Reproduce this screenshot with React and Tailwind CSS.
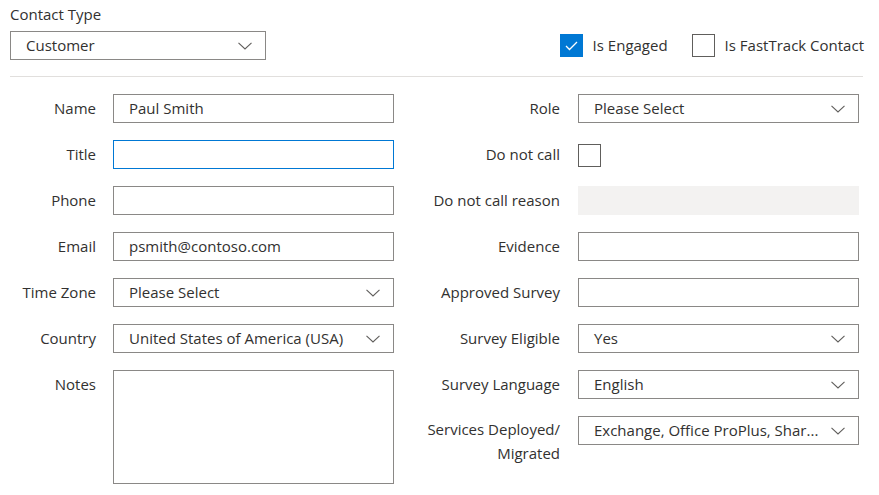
const font = { fontFamily: '"Open Sans", "Noto Sans", Arial, sans-serif' };

function Chevron() {
    return (
        <svg width="14" height="8" viewBox="0 0 14 8" className="shrink-0">
            <polyline points="0.5,0.8 7,7 13.5,0.8" fill="none" stroke="#605e5c" strokeWidth="1.1" />
        </svg>
    );
}

function Dropdown({ value, className = '' }) {
    return (
        <div className={`flex items-center justify-between border border-[#8a8886] bg-white pl-[15px] pr-[13px] ${className}`}>
            <span className="whitespace-nowrap text-[15px] text-[#323130]">{value}</span>
            <Chevron />
        </div>
    );
}

function TextBox({ value = '', focused = false, className = '' }) {
    return (
        <div
            className={`flex items-center bg-white pl-[15px] ${focused ? 'border-[1.5px] border-[#0078d4]' : 'border border-[#8a8886]'} ${className}`}
        >
            <span className="text-[15px] text-[#323130]">{value}</span>
        </div>
    );
}

function Checkbox({ checked = false }) {
    return checked ? (
        <div className="flex h-[23px] w-[23px] items-center justify-center bg-[#0078d4]">
            <svg width="13" height="10" viewBox="0 0 13 10">
                <polyline points="1,5 4.5,8.5 12,1" fill="none" stroke="white" strokeWidth="1.3" />
            </svg>
        </div>
    ) : (
        <div className="h-[23px] w-[23px] border-[1.5px] border-[#605e5c] bg-white" />
    );
}

function Row({ label, labelWidth, gap, children, top = 'pt-[2px]' }) {
    return (
        <div className="flex items-start" style={{ gap }}>
            <div className={`shrink-0 text-right text-[15px] leading-6 text-[#323130] ${top}`} style={{ width: labelWidth }}>
                {label}
            </div>
            {children}
        </div>
    );
}

const inputCls = 'h-[29px] w-[281px]';

export default function App() {
    return (
        <div className="h-[495px] w-[879px] bg-white" style={font}>
            {/* Header */}
            <div className="px-[10px]">
                <div className="pt-[2px] text-[15px] leading-6 text-[#323130]">Contact Type</div>
                <div className="mt-[5px] flex items-center justify-between">
                    <Dropdown value="Customer" className="h-[29px] w-[256px]" />
                    <div className="mr-[5px] flex items-center">
                        <div className="flex items-center gap-[10px]">
                            <Checkbox checked />
                            <span className="text-[15px] text-[#323130]">Is Engaged</span>
                        </div>
                        <div className="ml-[24px] flex items-center gap-[10px]">
                            <Checkbox />
                            <span className="text-[15px] text-[#323130]">Is FastTrack Contact</span>
                        </div>
                    </div>
                </div>
                <div className="mr-[6px] mt-[16px] h-px bg-[#e1dfdd]" />
            </div>

            {/* Form */}
            <div className="mt-[17px] flex px-[10px]">
                <div className="flex w-[384px] flex-col gap-[17px]">
                    <Row label="Name" labelWidth={86} gap={17}>
                        <TextBox value="Paul Smith" className={inputCls} />
                    </Row>
                    <Row label="Title" labelWidth={86} gap={17}>
                        <TextBox focused className={inputCls} />
                    </Row>
                    <Row label="Phone" labelWidth={86} gap={17}>
                        <TextBox className={inputCls} />
                    </Row>
                    <Row label="Email" labelWidth={86} gap={17}>
                        <TextBox value="psmith@contoso.com" className={inputCls} />
                    </Row>
                    <Row label="Time Zone" labelWidth={86} gap={17}>
                        <Dropdown value="Please Select" className={inputCls} />
                    </Row>
                    <Row label="Country" labelWidth={86} gap={17}>
                        <Dropdown value="United States of America (USA)" className={inputCls} />
                    </Row>
                    <Row label="Notes" labelWidth={86} gap={17}>
                        <div className="h-[114px] w-[281px] border border-[#8a8886] bg-white" />
                    </Row>
                </div>

                <div className="ml-[6px] flex flex-col gap-[17px]">
                    <Row label="Role" labelWidth={160} gap={18}>
                        <Dropdown value="Please Select" className={inputCls} />
                    </Row>
                    <Row label="Do not call" labelWidth={160} gap={18}>
                        <div className="flex h-[29px] items-center pt-[2px]">
                            <Checkbox />
                        </div>
                    </Row>
                    <Row label="Do not call reason" labelWidth={160} gap={18}>
                        <div className={`${inputCls} bg-[#f3f2f1]`} />
                    </Row>
                    <Row label="Evidence" labelWidth={160} gap={18}>
                        <TextBox className={inputCls} />
                    </Row>
                    <Row label="Approved Survey" labelWidth={160} gap={18}>
                        <TextBox className={inputCls} />
                    </Row>
                    <Row label="Survey Eligible" labelWidth={160} gap={18}>
                        <Dropdown value="Yes" className={inputCls} />
                    </Row>
                    <Row label="Survey Language" labelWidth={160} gap={18}>
                        <Dropdown value="English" className={inputCls} />
                    </Row>
                    <Row label={<>Services Deployed/<br />Migrated</>} labelWidth={160} gap={18} top="pt-[1px]">
                        <Dropdown value="Exchange, Office ProPlus, Shar..." className={inputCls} />
                    </Row>
                </div>
            </div>
        </div>
    );
}
